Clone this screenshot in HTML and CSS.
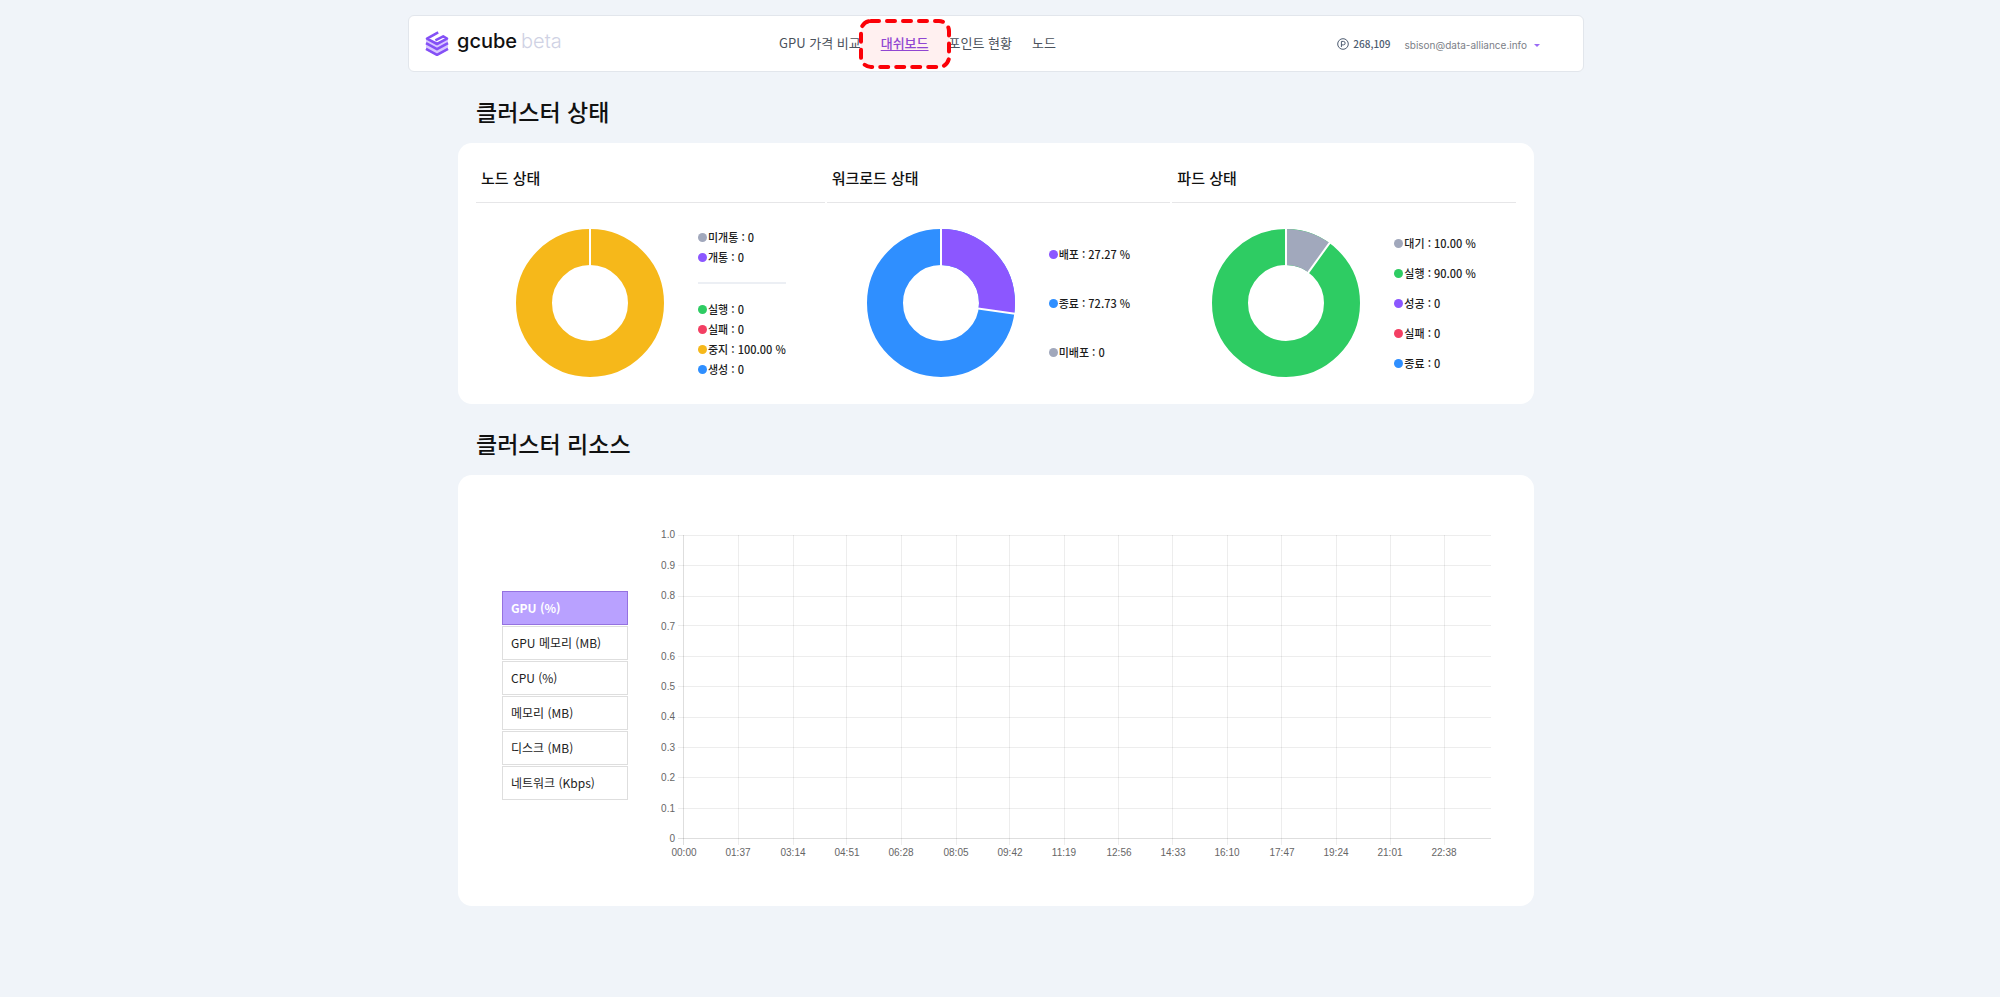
FILE: index.html
```html
<!DOCTYPE html>
<html lang="ko">
<head>
<meta charset="utf-8">
<title>gcube beta</title>
<link rel="stylesheet" href="styles.css">
</head>
<body>
<header class="topbar">
  <a class="brand" href="#">
    <svg class="brand-mark" viewBox="0 0 24 26" aria-hidden="true">
      <path fill="#d8c6ff" d="M1 8 12 14 23 8V19L12 25 1 19z"/>
      <g fill="none" stroke="#8450f6" stroke-width="2.6" stroke-linejoin="round">
        <path d="M13.2 1.4 2 7.6 12 13 22 7.6 18.2 5.4 10.4 9.4"/>
        <path d="M1 12.2 12 18.2 23 12.2"/>
        <path d="M1 17.8 12 23.8 23 17.8"/>
      </g>
    </svg>
    <span class="brand-name">gcube</span>
    <span class="brand-tag">beta</span>
  </a>
  <nav class="nav">
    <a href="#">GPU 가격 비교</a>
    <a class="current" href="#">대쉬보드<svg class="marker" viewBox="0 0 92 52" aria-hidden="true"><rect x="2" y="2" width="88" height="46" rx="10"/></svg></a>
    <a href="#">포인트 현황</a>
    <a href="#">노드</a>
  </nav>
  <div class="account">
    <span class="points">
      <svg class="points-icon" viewBox="0 0 12 12" aria-hidden="true"><circle cx="6" cy="6" r="5.3"/><path d="M4.4 9V3.4h2a1.7 1.7 0 0 1 0 3.5h-2"/></svg>
      268,109
    </span>
    <button class="user" type="button">sbison@data-alliance.info<span class="caret"></span></button>
  </div>
</header>

<main class="page">
  <h1 class="section-title">클러스터 상태</h1>
  <section class="card status">
    <article class="panel">
      <h2>노드 상태</h2>
      <div class="panel-body">
        <svg class="donut" viewBox="0 0 148 148" role="img" aria-label="노드 상태">
          <circle class="ring yellow" cx="74" cy="74" r="56"/>
          <path class="cut" d="M74 0v37"/>
        </svg>
        <ul class="legend">
          <li class="gray">미개통 : 0</li>
          <li class="purple">개통 : 0</li>
          <li class="rule" role="separator"></li>
          <li class="green">실행 : 0</li>
          <li class="red">실패 : 0</li>
          <li class="yellow">중지 : 100.00 %</li>
          <li class="blue">생성 : 0</li>
        </ul>
      </div>
    </article>
    <article class="panel">
      <h2>워크로드 상태</h2>
      <div class="panel-body">
        <svg class="donut" viewBox="0 0 148 148" role="img" aria-label="워크로드 상태">
          <circle class="ring blue" cx="74" cy="74" r="56"/>
          <circle class="ring purple" cx="74" cy="74" r="56" pathLength="10000" stroke-dasharray="2727 7273" transform="rotate(-90 74 74)"/>
          <path class="cut" d="M74 0v37M111 79.4l37 5.3"/>
        </svg>
        <ul class="legend loose">
          <li class="purple">배포 : 27.27 %</li>
          <li class="blue">종료 : 72.73 %</li>
          <li class="gray">미배포 : 0</li>
        </ul>
      </div>
    </article>
    <article class="panel">
      <h2>파드 상태</h2>
      <div class="panel-body">
        <svg class="donut" viewBox="0 0 148 148" role="img" aria-label="파드 상태">
          <circle class="ring green" cx="74" cy="74" r="56"/>
          <circle class="ring gray" cx="74" cy="74" r="56" pathLength="100" stroke-dasharray="10 90" transform="rotate(-90 74 74)"/>
          <path class="cut" d="M74 0v37M96 43.8l22-30.4"/>
        </svg>
        <ul class="legend medium">
          <li class="gray">대기 : 10.00 %</li>
          <li class="green">실행 : 90.00 %</li>
          <li class="purple">성공 : 0</li>
          <li class="red">실패 : 0</li>
          <li class="blue">종료 : 0</li>
        </ul>
      </div>
    </article>
  </section>

  <h1 class="section-title">클러스터 리소스</h1>
  <section class="card resources">
    <div class="metrics">
      <button class="selected" type="button">GPU (%)</button>
      <button type="button">GPU 메모리 (MB)</button>
      <button type="button">CPU (%)</button>
      <button type="button">메모리 (MB)</button>
      <button type="button">디스크 (MB)</button>
      <button type="button">네트워크 (Kbps)</button>
    </div>
    <svg class="chart" viewBox="0 0 837 340" role="img" aria-label="GPU (%)">
      <path class="grid" d="M24 10.5H837M24 40.5H837M24 71.5H837M24 100.5H837M24 131.5H837M24 161.5H837M24 192.5H837M24 222.5H837M24 252.5H837M24 283.5H837M84.5 10V320M139.5 10V320M192.5 10V320M247.5 10V320M302.5 10V320M355.5 10V320M410.5 10V320M464.5 10V320M518.5 10V320M573.5 10V320M627.5 10V320M682.5 10V320M736.5 10V320M790.5 10V320"/>
      <path class="axis" d="M29.5 10V320M24 313.5H837"/>
      <g class="y-labels">
        <text x="21" y="13">1.0</text><text x="21" y="44">0.9</text><text x="21" y="74">0.8</text><text x="21" y="105">0.7</text><text x="21" y="135">0.6</text><text x="21" y="165">0.5</text><text x="21" y="195">0.4</text><text x="21" y="226">0.3</text><text x="21" y="256">0.2</text><text x="21" y="287">0.1</text><text x="21" y="317">0</text>
      </g>
      <g class="x-labels">
        <text x="30" y="331">00:00</text><text x="84" y="331">01:37</text><text x="139" y="331">03:14</text><text x="193" y="331">04:51</text><text x="247" y="331">06:28</text><text x="302" y="331">08:05</text><text x="356" y="331">09:42</text><text x="410" y="331">11:19</text><text x="465" y="331">12:56</text><text x="519" y="331">14:33</text><text x="573" y="331">16:10</text><text x="628" y="331">17:47</text><text x="682" y="331">19:24</text><text x="736" y="331">21:01</text><text x="790" y="331">22:38</text>
      </g>
    </svg>
  </section>
</main>
</body>
</html>
```

FILE: styles.css
```css
* { box-sizing: border-box; }

body {
  margin: 0;
  padding: 15px 8px 0 0;
  background: #f0f4f9;
  color: #111;
  font-family: "Noto Sans CJK KR", sans-serif;
}

a { color: inherit; text-decoration: none; }
button { font: inherit; cursor: pointer; }
h1, h2, ul { margin: 0; padding: 0; }

.topbar {
  display: grid;
  grid-template-columns: 354px auto 1fr;
  align-items: center;
  max-width: 1176px;
  height: 57px;
  margin: 0 auto;
  padding: 0 43px 0 16px;
  border: 1px solid #e2e6ec;
  border-radius: 6px;
  background: #fff;
}

.brand { display: flex; align-items: center; font: 20px/24px Inter, sans-serif; }
.brand-mark { width: 24px; height: 26px; margin-right: 8px; }
.brand-name, .brand-tag { padding-bottom: 5px; }
.brand-name { color: #111; font-weight: 500; margin-right: 4px; }
.brand-tag { color: #cfd2e4; font-weight: 300; }

.nav { display: flex; gap: 20px; padding-bottom: 2px; color: #4b525c; font-size: 13px; line-height: 20px; }
.current { position: relative; color: #8a4be0; font-weight: 500; text-decoration: underline; text-underline-offset: 2px; }
.marker {
  position: absolute;
  top: -14px;
  left: -22px;
  width: 92px;
  height: 52px;
  fill: rgba(255, 0, 0, 0.06);
  stroke: #fb0007;
  stroke-width: 4;
  stroke-dasharray: 8 8;
  stroke-linecap: round;
}

.account { display: flex; justify-content: flex-end; align-items: center; gap: 14px; }
.points { display: flex; align-items: center; gap: 4px; color: #4d5b70; font: 500 10px/16px "Noto Sans CJK KR", sans-serif; }
.points-icon { width: 12px; height: 12px; fill: none; stroke: #4d5b70; }
.user { display: flex; align-items: center; gap: 7px; padding: 3px 0 0; border: 0; background: none; color: #7c8087; font: 10px/16px Inter, sans-serif; }
.caret { border: 3px solid transparent; border-top-color: #9a6bf5; border-bottom: 0; }

.page { max-width: 1076px; margin: 0 auto; }

.section-title { padding: 22px 18px 15px; font-size: 23px; font-weight: 500; line-height: 34px; }
.card { border-radius: 14px; background: #fff; }

.status { display: grid; grid-template-columns: 349fr 344fr 344fr; gap: 2px; padding: 11px 18px 25px; }
.panel h2 { padding: 12px 5px; border-bottom: 1px solid #e6e6e8; font-size: 15px; font-weight: 500; line-height: 24px; }
.panel-body { display: flex; align-items: center; gap: 34px; height: 176px; padding: 24px 0 0 40px; }

.donut { width: 148px; height: 148px; flex: none; }
.ring { fill: none; stroke: currentColor; stroke-width: 36; }
.cut { fill: none; stroke: #fff; stroke-width: 2; }

.legend { display: flex; flex-direction: column; list-style: none; font-size: 11px; font-weight: 500; line-height: 20px; }
.legend.medium { gap: 10px; }
.legend.loose { gap: 29px; }
.legend li { display: flex; align-items: center; gap: 1px; -webkit-text-fill-color: #1c1c1c; }
.legend li::before { content: ""; width: 9px; height: 9px; border-radius: 50%; background: currentColor; }
.legend .rule { height: 2px; margin: 15px 0; background: #eceff4; }
.legend .rule::before { display: none; }

.gray { color: #a1a8bc; }
.purple { color: #8c57ff; }
.green { color: #2ecc63; }
.red { color: #f33f63; }
.yellow { color: #f6b81a; }
.blue { color: #2f8fff; }

.resources { display: flex; align-items: center; gap: 26px; padding: 50px 43px 41px 44px; }
.metrics { display: flex; flex-direction: column; flex: none; gap: 1px; width: 126px; }
.metrics button {
  height: 34px;
  padding: 0 8px;
  border: 1px solid #dedede;
  background: #fff;
  color: #222;
  font-size: 12px;
  text-align: left;
}
.metrics .selected { border-color: #9472e0; background: #b9a1ff; color: #fff; font-weight: 700; }

.chart { flex: 1; min-width: 0; font: 10px "Liberation Sans", sans-serif; fill: #666; }
.grid { stroke: rgba(0, 0, 0, 0.07); }
.axis { stroke: rgba(0, 0, 0, 0.13); }
.y-labels { text-anchor: end; }
.x-labels { text-anchor: middle; }
```
